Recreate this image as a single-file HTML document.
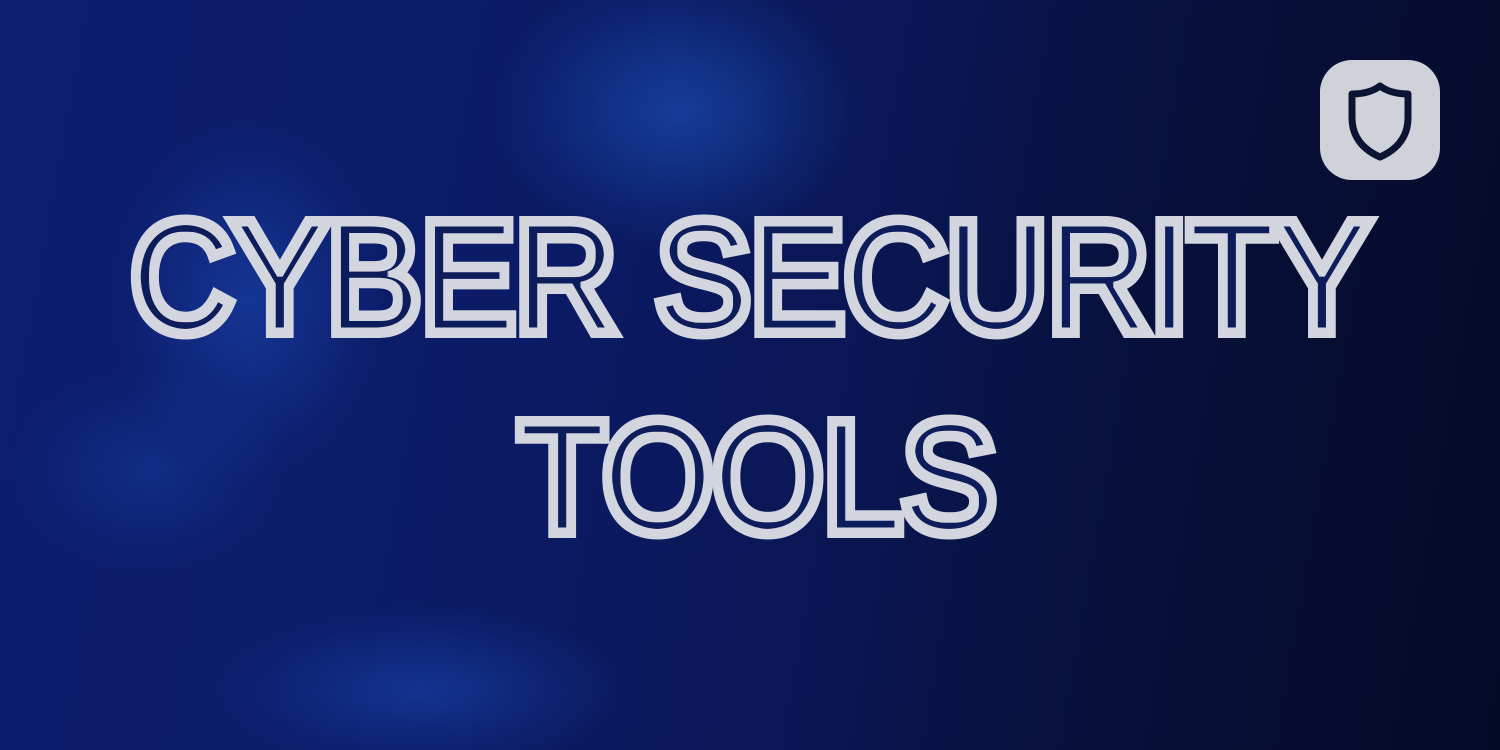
<!DOCTYPE html>
<html><head><meta charset="utf-8"><style>
html,body{margin:0;padding:0;}
body{width:1500px;height:750px;overflow:hidden;position:relative;
background:
radial-gradient(ellipse 260px 200px at 680px 110px, rgba(30,90,200,.55), transparent 70%),
radial-gradient(ellipse 200px 260px at 250px 300px, rgba(30,80,190,.5), transparent 70%),
radial-gradient(ellipse 300px 120px at 420px 690px, rgba(30,80,190,.45), transparent 70%),
radial-gradient(ellipse 200px 150px at 150px 470px, rgba(25,70,170,.4), transparent 70%),
linear-gradient(100deg,#0c1d6e 0%,#0b1b66 35%,#0a1756 55%,#07103a 75%,#040a26 100%);}
svg{position:absolute;left:0;top:0;}
</style></head><body>
<svg width="1500" height="750" viewBox="0 0 1500 750">
<defs><filter id="er" x="-5%" y="-20%" width="110%" height="140%"><feMorphology operator="erode" radius="2.5"/></filter></defs>
<g font-family="Liberation Sans, sans-serif" font-size="154">
<g fill="#d3d5df" stroke="#d3d5df" stroke-width="16" stroke-linejoin="miter">
<text x="131" y="330" textLength="1238" lengthAdjust="spacingAndGlyphs">CYBER SECURITY</text>
<text x="519" y="530" textLength="477" lengthAdjust="spacingAndGlyphs">TOOLS</text>
</g>
<g fill="#0b1a5a" filter="url(#er)">
<text x="131" y="330" textLength="1238" lengthAdjust="spacingAndGlyphs">CYBER SECURITY</text>
<text x="519" y="530" textLength="477" lengthAdjust="spacingAndGlyphs">TOOLS</text>
</g>
</g>
<rect x="1320" y="60" width="120" height="120" rx="32" fill="#d0d2da"/>
<path d="M1380 86 C1372 92 1363 94 1352 94 L1352 118 C1352 136 1362 149 1380 157 C1398 149 1408 136 1408 118 L1408 94 C1397 94 1388 92 1380 86 Z" fill="none" stroke="#0b1533" stroke-width="7" stroke-linejoin="round"/>
</svg>
</body></html>
